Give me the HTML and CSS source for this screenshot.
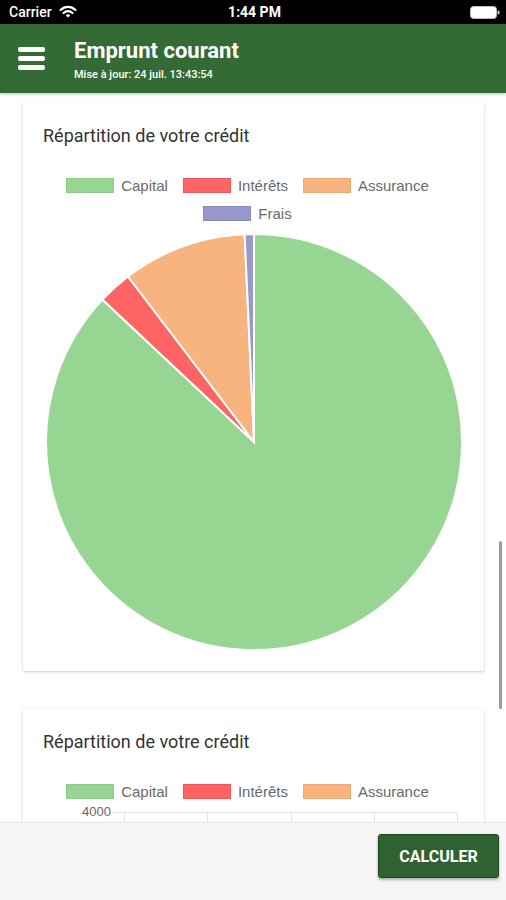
FILE: index.html
```html
<!DOCTYPE html>
<html lang="fr">
<head>
    <meta charset="UTF-8">
    <meta name="viewport" content="width=device-width, initial-scale=1.0">
    <title>Emprunt courant</title>
    <link rel="stylesheet" href="styles.css">
</head>
<body>
    <div class="status-bar">
        <div class="status-left">
            <span>Carrier</span>
            <svg class="wifi" width="18" height="13" viewBox="0 0 18 13">
                <path d="M1.6 5 A10.5 10.5 0 0 1 16.4 5" fill="none" stroke="#fff" stroke-width="2.3" stroke-linecap="round"/>
                <path d="M4.5 8 A6.4 6.4 0 0 1 13.5 8" fill="none" stroke="#fff" stroke-width="2.3" stroke-linecap="round"/>
                <path d="M9 12.6 L6.8 10.4 A3.1 3.1 0 0 1 11.2 10.4 Z" fill="#fff"/>
            </svg>
        </div>
        <div class="status-time">1:44 PM</div>
        <div class="status-right">
            <svg width="30" height="13" viewBox="0 0 30 13">
                <rect x="0.5" y="0.5" width="26" height="12" rx="3" fill="#fff" stroke="#bbb" stroke-width="1"/>
                <rect x="27.5" y="4.5" width="2" height="4" rx="1" fill="#ccc"/>
            </svg>
        </div>
    </div>

    <header class="app-header">
        <div class="menu-btn">
            <span></span><span></span><span></span>
        </div>
        <div class="titles">
            <h1>Emprunt courant</h1>
            <p>Mise à jour: 24 juil. 13:43:54</p>
        </div>
    </header>

    <main class="content">
        <section class="card">
            <h2>Répartition de votre crédit</h2>
            <ul class="legend">
                <li><i class="box capital"></i>Capital</li>
                <li><i class="box interets"></i>Intérêts</li>
                <li><i class="box assurance"></i>Assurance</li>
                <li><i class="box frais"></i>Frais</li>
            </ul>
            <svg class="pie" width="418" height="418" viewBox="-1 -1 418 418">
                <path d="M208 208 L208 0 A208 208 0 1 1 56.4 65.6 Z" fill="#97d592" stroke="#fff" stroke-width="2"/>
                <path d="M208 208 L56.4 65.6 A208 208 0 0 1 82 42.5 Z" fill="#ff6464" stroke="#fff" stroke-width="2"/>
                <path d="M208 208 L82 42.5 A208 208 0 0 1 198.6 0.2 Z" fill="#f8b47f" stroke="#fff" stroke-width="2"/>
                <path d="M208 208 L198.6 0.2 A208 208 0 0 1 208 0 Z" fill="#9898cc" stroke="#fff" stroke-width="2"/>
            </svg>
        </section>

        <section class="card">
            <h2>Répartition de votre crédit</h2>
            <ul class="legend">
                <li><i class="box capital"></i>Capital</li>
                <li><i class="box interets"></i>Intérêts</li>
                <li><i class="box assurance"></i>Assurance</li>
            </ul>
            <svg class="bars" width="421" height="120" viewBox="0 0 421 120">
                <text x="68" y="8" text-anchor="end" dominant-baseline="middle">4000</text>
                <line x1="69" y1="7.5" x2="414" y2="7.5" stroke="#e2e2e2"/>
                <line x1="81.5" y1="7.5" x2="81.5" y2="120" stroke="#e2e2e2"/>
                <line x1="164.5" y1="7.5" x2="164.5" y2="120" stroke="#e2e2e2"/>
                <line x1="248.5" y1="7.5" x2="248.5" y2="120" stroke="#e2e2e2"/>
                <line x1="331.5" y1="7.5" x2="331.5" y2="120" stroke="#e2e2e2"/>
                <line x1="414.5" y1="7.5" x2="414.5" y2="120" stroke="#e2e2e2"/>
            </svg>
        </section>

        <div class="scrollbar"></div>
    </main>

    <footer class="footer">
        <button type="button" class="btn-calc">CALCULER</button>
    </footer>
</body>
</html>
```

FILE: styles.css
```css
body {
    margin: 0;
    width: 506px;
    height: 900px;
    overflow: hidden;
    display: flex;
    flex-direction: column;
    font-family: Roboto, "Liberation Sans", sans-serif;
    background-color: #fff;
}
.status-bar {
    height: 24px;
    flex: none;
    background-color: #000;
    color: #fff;
    display: grid;
    grid-template-columns: 1fr auto 1fr;
    align-items: center;
    padding: 0 6px 0 9px;
    font-size: 14px;
}
.status-left {
    display: flex;
    align-items: center;
    gap: 7px;
    font-weight: 500;
}
.status-left .wifi {
    margin-top: -1px;
}
.status-time {
    font-weight: bold;
}
.status-right {
    display: flex;
    justify-content: flex-end;
    padding-top: 1px;
}
.app-header {
    height: 69px;
    flex: none;
    background-color: #346a33;
    color: #fff;
    display: flex;
    align-items: center;
    box-shadow: 0 1px 3px rgba(0, 0, 0, 0.25);
    position: relative;
    z-index: 2;
}
.menu-btn {
    margin-left: 18px;
    width: 27px;
    display: flex;
    flex-direction: column;
    gap: 4px;
}
.menu-btn span {
    display: block;
    height: 5px;
    background-color: #fff;
    border-radius: 2px;
}
.titles {
    margin-left: 29px;
    padding-top: 2px;
}
.titles h1 {
    margin: 0;
    font-size: 22px;
    line-height: 26px;
    font-weight: bold;
}
.titles p {
    margin: 4px 0 0;
    font-size: 11px;
    line-height: 14px;
    font-weight: 500;
}
.content {
    flex: 1;
    overflow: hidden;
    position: relative;
    padding: 10px 22px 0 23px;
}
.card {
    background-color: #fff;
    border-radius: 2px;
    box-shadow: 0 1px 3px rgba(0, 0, 0, 0.22), 0 0 1px rgba(0, 0, 0, 0.06);
    padding: 21px 20px 20px;
    display: flex;
    flex-direction: column;
    align-items: center;
}
.card + .card {
    margin-top: 38px;
}
.card h2 {
    align-self: stretch;
    margin: 0;
    font-size: 18px;
    line-height: 24px;
    font-weight: normal;
    color: #333;
}
.legend {
    list-style: none;
    margin: 27px 0 0;
    padding: 0 12px 0 0;
    display: flex;
    flex-wrap: wrap;
    justify-content: center;
    row-gap: 8px;
    column-gap: 15px;
    max-width: 390px;
    font-family: "Liberation Sans", Arial, sans-serif;
    font-size: 15px;
    color: #6a6a6a;
}
.legend li {
    display: flex;
    align-items: center;
    height: 20px;
}
.box {
    display: inline-block;
    width: 46px;
    height: 13px;
    margin-right: 7px;
    border: 1px solid;
}
.box.capital {
    background-color: #97d592;
    border-color: #8ccc87;
}
.box.interets {
    background-color: #ff6464;
    border-color: #f25555;
}
.box.assurance {
    background-color: #f8b47f;
    border-color: #f0a872;
}
.box.frais {
    background-color: #9898cc;
    border-color: #8a8ac2;
}
.pie {
    display: block;
    margin-top: 10px;
}
.bars {
    display: block;
    margin-top: 4px;
    align-self: flex-start;
}
.bars text {
    font-family: "Liberation Sans", Arial, sans-serif;
    font-size: 13px;
    fill: #666;
}
.scrollbar {
    position: absolute;
    right: 4px;
    top: 448px;
    width: 3px;
    height: 168px;
    border-radius: 2px;
    background-color: #9a9a9a;
}
.footer {
    height: 78px;
    flex: none;
    box-sizing: border-box;
    background-color: #f5f5f5;
    border-top: 1px solid #e6e6e6;
    display: flex;
    justify-content: flex-end;
    align-items: flex-start;
    padding: 11px 7px 0 0;
    position: relative;
    z-index: 2;
}
.btn-calc {
    width: 121px;
    height: 44px;
    background-color: #2e6331;
    color: #fff;
    border: 1px solid #1f4822;
    border-radius: 3px;
    font-family: Roboto, sans-serif;
    font-size: 16px;
    font-weight: bold;
    box-shadow: 0 2px 3px rgba(0, 0, 0, 0.3);
    cursor: pointer;
}
```
